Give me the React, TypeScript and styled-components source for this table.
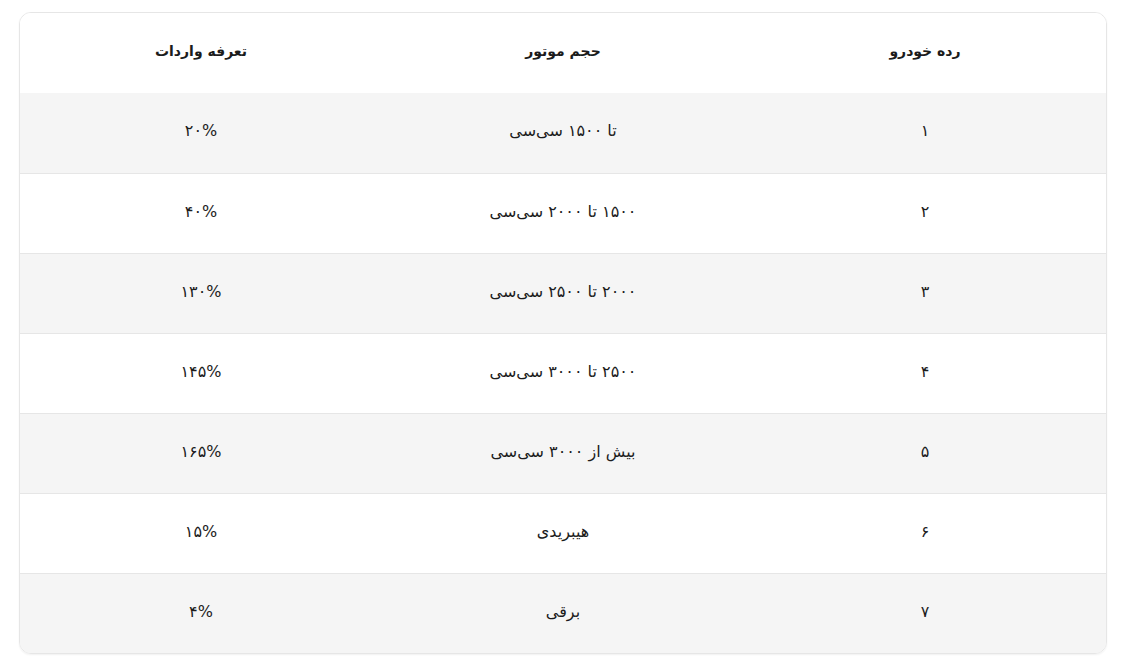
import styled, { createGlobalStyle } from 'styled-components';

interface ITariffRow {
  rank: string;
  engine: string;
  tariff: string;
}

const rows: ITariffRow[] = [
  { rank: '۱', engine: 'تا ۱۵۰۰ سی‌سی', tariff: '۲۰%' },
  { rank: '۲', engine: '۱۵۰۰ تا ۲۰۰۰ سی‌سی', tariff: '۴۰%' },
  { rank: '۳', engine: '۲۰۰۰ تا ۲۵۰۰ سی‌سی', tariff: '۱۳۰%' },
  { rank: '۴', engine: '۲۵۰۰ تا ۳۰۰۰ سی‌سی', tariff: '۱۴۵%' },
  { rank: '۵', engine: 'بیش از ۳۰۰۰ سی‌سی', tariff: '۱۶۵%' },
  { rank: '۶', engine: 'هیبریدی', tariff: '۱۵%' },
  { rank: '۷', engine: 'برقی', tariff: '۴%' },
];

const GlobalStyle = createGlobalStyle`
  html, body {
    margin: 0;
    background: #ffffff;
  }
  body {
    font-family: 'DejaVu Sans', 'Noto Sans', sans-serif;
    color: #1c1c1c;
  }
`;

const Page = styled.div`
  padding: 12px 20px 11px 19px;
`;

const TableBox = styled.div`
  border: 1px solid #e6e6e6;
  border-radius: 12px;
  overflow: hidden;
  box-shadow: 0 1px 2px rgba(0, 0, 0, 0.06);
`;

const Table = styled.table`
  width: 100%;
  border-collapse: collapse;
  table-layout: fixed;
  direction: rtl;
`;

const Row = styled.tr<{ $shaded?: boolean }>`
  height: 80px;
  background: ${(p) => (p.$shaded ? '#f5f5f5' : '#ffffff')};
  border-top: 1px solid #e6e6e6;

  &:first-child {
    border-top: none;
  }
`;

const HeadCell = styled.th`
  text-align: center;
  font-size: 14px;
  font-weight: bold;
  padding: 0 10px 4px;
`;

const Cell = styled.td`
  text-align: center;
  font-size: 16px;
  font-weight: normal;
  padding: 0 10px 4px;
`;

export default function App() {
  return (
    <>
      <GlobalStyle />
      <Page>
        <TableBox>
          <Table>
            <thead>
              <Row>
                <HeadCell>رده خودرو</HeadCell>
                <HeadCell>حجم موتور</HeadCell>
                <HeadCell>تعرفه واردات</HeadCell>
              </Row>
            </thead>
            <tbody>
              {rows.map((row, index) => (
                <Row key={index} $shaded={index % 2 === 0}>
                  <Cell>{row.rank}</Cell>
                  <Cell>{row.engine}</Cell>
                  <Cell>{row.tariff}</Cell>
                </Row>
              ))}
            </tbody>
          </Table>
        </TableBox>
      </Page>
    </>
  );
}
